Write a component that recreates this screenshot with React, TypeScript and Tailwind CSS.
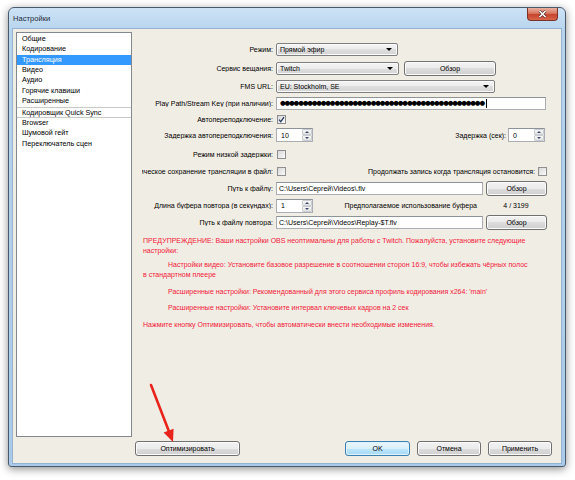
import React from 'react';

const Tri = ({ up }: { up?: boolean }) => (
  <span
    className={
      up
        ? 'h-0 w-0 border-x-[2.5px] border-b-[2.5px] border-x-transparent border-b-[#3b4b6b]'
        : 'h-0 w-0 border-x-[2.5px] border-t-[2.5px] border-x-transparent border-t-[#3b4b6b]'
    }
  />
);

const Dropdown = ({ w, text }: { w: string; text: string }) => (
  <div
    className={`flex h-[13px] items-center rounded-[2px] border border-[#7f7f7f] bg-[linear-gradient(#f4f4f4,#ececec_50%,#dedede_50%,#d4d4d4)] pl-[3px] shadow-[inset_0_0_0_1px_#fafafa] ${w}`}
  >
    <span className="whitespace-nowrap">{text}</span>
    <span className="ml-auto mr-[5px] h-0 w-0 border-x-[3px] border-t-[3px] border-x-transparent border-t-black" />
  </div>
);

const Button = ({ w, text, focused }: { w: string; text: string; focused?: boolean }) => (
  <div
    className={
      focused
        ? `flex h-[15px] items-center justify-center rounded-[3px] border border-[#3c7fb1] bg-[linear-gradient(#eaf6fd,#d9f0fc_50%,#bee6fd_50%,#a7d9f5)] shadow-[inset_0_0_0_1px_#dff3fd] ${w}`
        : `flex h-[15px] items-center justify-center rounded-[3px] border border-[#707070] bg-[linear-gradient(#f2f2f2,#ebebeb_50%,#dddddd_50%,#cfcfcf)] shadow-[inset_0_0_0_1px_#fbfbfb] ${w}`
    }
  >
    {text}
  </div>
);

const Input = ({ w, children }: { w: string; children?: React.ReactNode }) => (
  <div className={`flex h-[13px] items-center overflow-hidden border border-[#abadb3] border-t-[#8e9399] bg-white pl-[2px] ${w}`}>
    {children}
  </div>
);

const Spin = ({ w, value }: { w: string; value: string }) => (
  <div className={`flex h-[14px] items-center border border-[#abadb3] border-t-[#8e9399] bg-white ${w}`}>
    <span className="pl-[4px]">{value}</span>
    <div className="ml-auto flex h-full w-[10px] flex-col">
      <div className="flex flex-1 items-center justify-center rounded-[1px] border border-[#c9ccd1] bg-linear-to-b from-[#f7f7f7] to-[#e4e4e4]">
        <Tri up />
      </div>
      <div className="flex flex-1 items-center justify-center rounded-[1px] border border-[#c9ccd1] bg-linear-to-b from-[#f7f7f7] to-[#e4e4e4]">
        <Tri />
      </div>
    </div>
  </div>
);

const Check = ({ checked, cls }: { checked?: boolean; cls: string }) => (
  <div
    className={`flex h-[9px] w-[9px] shrink-0 items-center justify-center border border-[#8f8f8f] bg-linear-to-br from-[#d8d8d8] to-[#fbfbfb] ${cls}`}
  >
    {checked && (
      <svg width="7" height="7" viewBox="0 0 7 7">
        <path d="M1 3.6 L2.8 5.6 L6 1.2" fill="none" stroke="#2a3d63" strokeWidth="1.3" />
      </svg>
    )}
  </div>
);

const Label = ({ text }: { text: string }) => (
  <div className="flex w-[131px] shrink-0 justify-end overflow-hidden whitespace-nowrap">
    <span className="shrink-0">{text}</span>
  </div>
);

const items = [
  'Общие',
  'Кодирование',
  'Трансляция',
  'Видео',
  'Аудио',
  'Горячие клавиши',
  'Расширенные',
];

export default function App() {
  return (
    <div className="relative h-[480px] w-[575px] overflow-hidden bg-white text-[7px] leading-none text-black [font-family:'Liberation_Sans',Arial,sans-serif]">
      <div className="ml-[8px] mt-[7px] h-[460px] w-[558px] rounded-t-[6px] rounded-b-[3px] border border-[#4a5b6d] bg-[linear-gradient(180deg,#cde2f5,#b7d4ee_22px,#a9cbe9)] shadow-[0_2px_9px_rgba(0,0,0,0.45)]">
        {/* title bar */}
        <div className="flex h-[21px] pl-[4px]">
          <span className="self-center pt-[1px] text-[7.6px] text-[#1e2b3a]">Настройки</span>
          <div className="ml-auto mr-[7px] flex h-[13px] w-[31px] items-center justify-center rounded-b-[4px] border border-t-0 border-[#7a3328] bg-[linear-gradient(#eab1a0,#d9765e_45%,#c6432c_55%,#d7664a)]">
            <svg width="9" height="8" viewBox="0 0 9 8">
              <path d="M1.5 1 L7.5 7 M7.5 1 L1.5 7" stroke="#4a2520" strokeWidth="2.8" />
              <path d="M1.5 1 L7.5 7 M7.5 1 L1.5 7" stroke="#ffffff" strokeWidth="1.6" />
            </svg>
          </div>
        </div>

        {/* client area */}
        <div className="mx-[4px] flex h-[434px] flex-col bg-[#f0ede4] pl-[3px] pt-[3px] shadow-[0_0_0_1px_#93b3d1]">
          <div className="flex h-[405px]">
            {/* list */}
            <div className="h-[405px] w-[116px] shrink-0 border border-[#828790] bg-white pt-[0.8px] text-[7.2px]">
              {items.map((t) => (
                <div
                  key={t}
                  className={
                    t === 'Трансляция'
                      ? 'h-[10.4px] whitespace-nowrap bg-[#3399ff] pl-[5px] leading-[10.4px] text-white'
                      : 'h-[10.4px] whitespace-nowrap pl-[5px] leading-[10.4px]'
                  }
                >
                  {t}
                </div>
              ))}
              <div className="box-content h-[9.4px] whitespace-nowrap border-y border-[#c9c9c9] pl-[5px] leading-[9.4px]">
                Кодировщик Quick Sync
              </div>
              {['Browser', 'Шумовой гейт', 'Переключатель сцен'].map((t) => (
                <div key={t} className="h-[10.4px] whitespace-nowrap pl-[5px] leading-[10.4px]">
                  {t}
                </div>
              ))}
            </div>

            {/* form */}
            <div className="ml-[10px] flex w-[405px] flex-col">
              <div className="mt-[10.5px] flex h-[14px] items-center">
                <Label text="Режим:" />
                <div className="ml-[3px]">
                  <Dropdown w="w-[122px]" text="Прямой эфир" />
                </div>
              </div>
              <div className="mt-[4.5px] flex h-[14px] items-center">
                <Label text="Сервис вещания:" />
                <div className="ml-[3px]">
                  <Dropdown w="w-[123px]" text="Twitch" />
                </div>
                <div className="ml-[5px]">
                  <Button w="w-[92px]" text="Обзор" />
                </div>
              </div>
              <div className="mt-[4.5px] flex h-[14px] items-center">
                <Label text="FMS URL:" />
                <div className="ml-[3px]">
                  <Dropdown w="w-[219px]" text="EU: Stockholm, SE" />
                </div>
              </div>
              <div className="mt-[3px] flex h-[14px] items-center">
                <Label text="Play Path/Stream Key (при наличии):" />
                <div className="ml-[3px]">
                  <Input w="w-[270px]">
                    <span className="pl-[1px] text-[6.5px] tracking-[-1.14px] whitespace-nowrap [font-family:'DejaVu_Sans',sans-serif]">
                      {'●'.repeat(45)}
                    </span>
                    <span className="ml-[2px] h-[9px] w-[1px] shrink-0 bg-black" />
                  </Input>
                </div>
              </div>
              <div className="mt-[1.5px] flex h-[14px] items-center">
                <Label text="Автопереподключение:" />
                <Check checked cls="ml-[4px]" />
              </div>
              <div className="mt-[2px] flex h-[14px] items-center">
                <Label text="Задержка автопереподключения:" />
                <div className="ml-[3px]">
                  <Spin w="w-[37px]" value="10" />
                </div>
                <span className="ml-auto whitespace-nowrap">Задержка (сек):</span>
                <div className="ml-[2px] mr-[2px]">
                  <Spin w="w-[37px]" value="0" />
                </div>
              </div>
              <div className="mt-[5px] flex h-[14px] items-center">
                <Label text="Режим низкой задержки:" />
                <Check cls="ml-[4px]" />
              </div>
              <div className="mt-[3px] flex h-[14px] items-center">
                <Label text="Автоматическое сохранение трансляции в файл:" />
                <Check cls="ml-[4px]" />
                <span className="ml-auto whitespace-nowrap">Продолжать запись когда трансляция остановится:</span>
                <Check cls="ml-[3px]" />
              </div>
              <div className="mt-[3.5px] flex h-[14px] items-center">
                <Label text="Путь к файлу:" />
                <div className="ml-[3px]">
                  <Input w="w-[207px]">{'C:\\Users\\Сергей\\Videos\\.flv'}</Input>
                </div>
                <div className="ml-[3px]">
                  <Button w="w-[61px]" text="Обзор" />
                </div>
              </div>
              <div className="mt-[3px] flex h-[14px] items-center">
                <Label text="Длина буфера повтора (в секундах):" />
                <div className="ml-[3px]">
                  <Spin w="w-[37px]" value="1" />
                </div>
                <span className="ml-auto whitespace-nowrap">Предполагаемое использование буфера</span>
                <div className="ml-[8px] flex h-[14px] w-[62px] items-center justify-center">4 / 3199</div>
              </div>
              <div className="mt-[3px] flex h-[14px] items-center">
                <Label text="Путь к файлу повтора:" />
                <div className="ml-[3px]">
                  <Input w="w-[207px]">{'C:\\Users\\Сергей\\Videos\\Replay-$T.flv'}</Input>
                </div>
                <div className="ml-[3px]">
                  <Button w="w-[61px]" text="Обзор" />
                </div>
              </div>

              {/* warnings */}
              <div className="mt-[6.75px] flex flex-col pl-[1px] leading-[9.5px] text-[#f2203a]">
                <div className="whitespace-nowrap">
                  ПРЕДУПРЕЖДЕНИЕ: Ваши настройки OBS неоптимальны для работы с Twitch. Пожалуйста, установите следующие
                </div>
                <div className="whitespace-nowrap">настройки:</div>
                <div className="mt-[5px] whitespace-nowrap pl-[25px]">
                  Настройки видео: Установите базовое разрешение в соотношении сторон 16:9, чтобы избежать чёрных полос
                </div>
                <div className="whitespace-nowrap">в стандартном плеере</div>
                <div className="mt-[8px] whitespace-nowrap pl-[25px]">
                  Расширенные настройки: Рекомендованный для этого сервиса профиль кодирования x264: 'main'
                </div>
                <div className="mt-[6.5px] whitespace-nowrap pl-[25px]">
                  Расширенные настройки: Установите интервал ключевых кадров на 2 сек
                </div>
                <div className="mt-[7.5px] whitespace-nowrap">
                  Нажмите кнопку Оптимизировать, чтобы автоматически внести необходимые изменения.
                </div>
              </div>
            </div>
          </div>

          {/* bottom buttons */}
          <div className="mt-[4px] flex h-[15px] items-center">
            <div className="ml-[119px]">
              <Button w="w-[105px]" text="Оптимизировать" />
            </div>
            <div className="ml-auto">
              <Button w="w-[65px]" text="OK" focused />
            </div>
            <div className="ml-[7px]">
              <Button w="w-[64px]" text="Отмена" />
            </div>
            <div className="ml-[7px] mr-[9px]">
              <Button w="w-[64px]" text="Применить" />
            </div>
          </div>
        </div>
      </div>

      {/* annotation arrow */}
      <svg className="pointer-events-none absolute left-0 top-0" width="575" height="480">
        <line x1="151" y1="385" x2="168.8" y2="431" stroke="#e8241c" strokeWidth="2.6" strokeLinecap="round" />
        <polygon points="173,442 163.6,432.4 173.6,428.8" fill="#e8241c" />
      </svg>
    </div>
  );
}
